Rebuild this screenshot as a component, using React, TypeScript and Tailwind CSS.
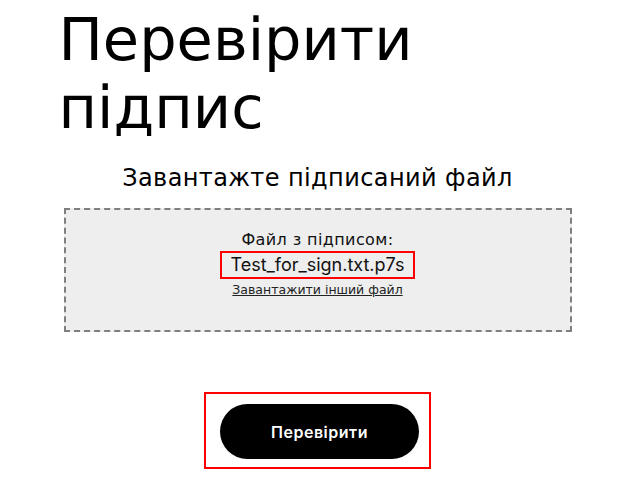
export default function App() {
  return (
    <div className="min-h-screen bg-white text-black" style={{ fontFamily: "'DejaVu Sans', Inter, sans-serif" }}>
      <div className="mx-auto w-[508px] pt-[6px]">
        <h1 className="-ml-[5px] text-[59px] font-normal leading-[68px]">
          Перевірити
          <br />
          підпис
        </h1>
        <p className="mt-[21px] text-center text-[24px] leading-[30px] tracking-[0.4px]">Завантажте підписаний файл</p>
        <div className="mt-[15px] flex h-[124px] flex-col items-center justify-center border-2 border-dashed border-[#7f7f7f] bg-[#eeeeee] pb-[12px]">
          <p className="text-[16px] leading-[20px] tracking-[0.4px] text-[#111]">Файл з підписом:</p>
          <p className="mt-[1px] border-2 border-[#ff0000] px-[8px] font-['Inter'] text-[18px] leading-[24px] text-[#111]">
            Test_for_sign.txt.p7s
          </p>
          <a href="#" className="mt-[3px] text-[12.5px] leading-[16px] text-[#222] underline">
            Завантажити інший файл
          </a>
        </div>
        <div className="mt-[60px] flex justify-center">
          <div className="border-2 border-[#ff0000] pb-[8px] pl-[14px] pr-[10px] pt-[10px]">
            <button className="h-[55px] w-[199px] rounded-full bg-black font-['Inter'] text-[16px] font-semibold tracking-[0.5px] text-white">
              Перевірити
            </button>
          </div>
        </div>
      </div>
    </div>
  );
}
